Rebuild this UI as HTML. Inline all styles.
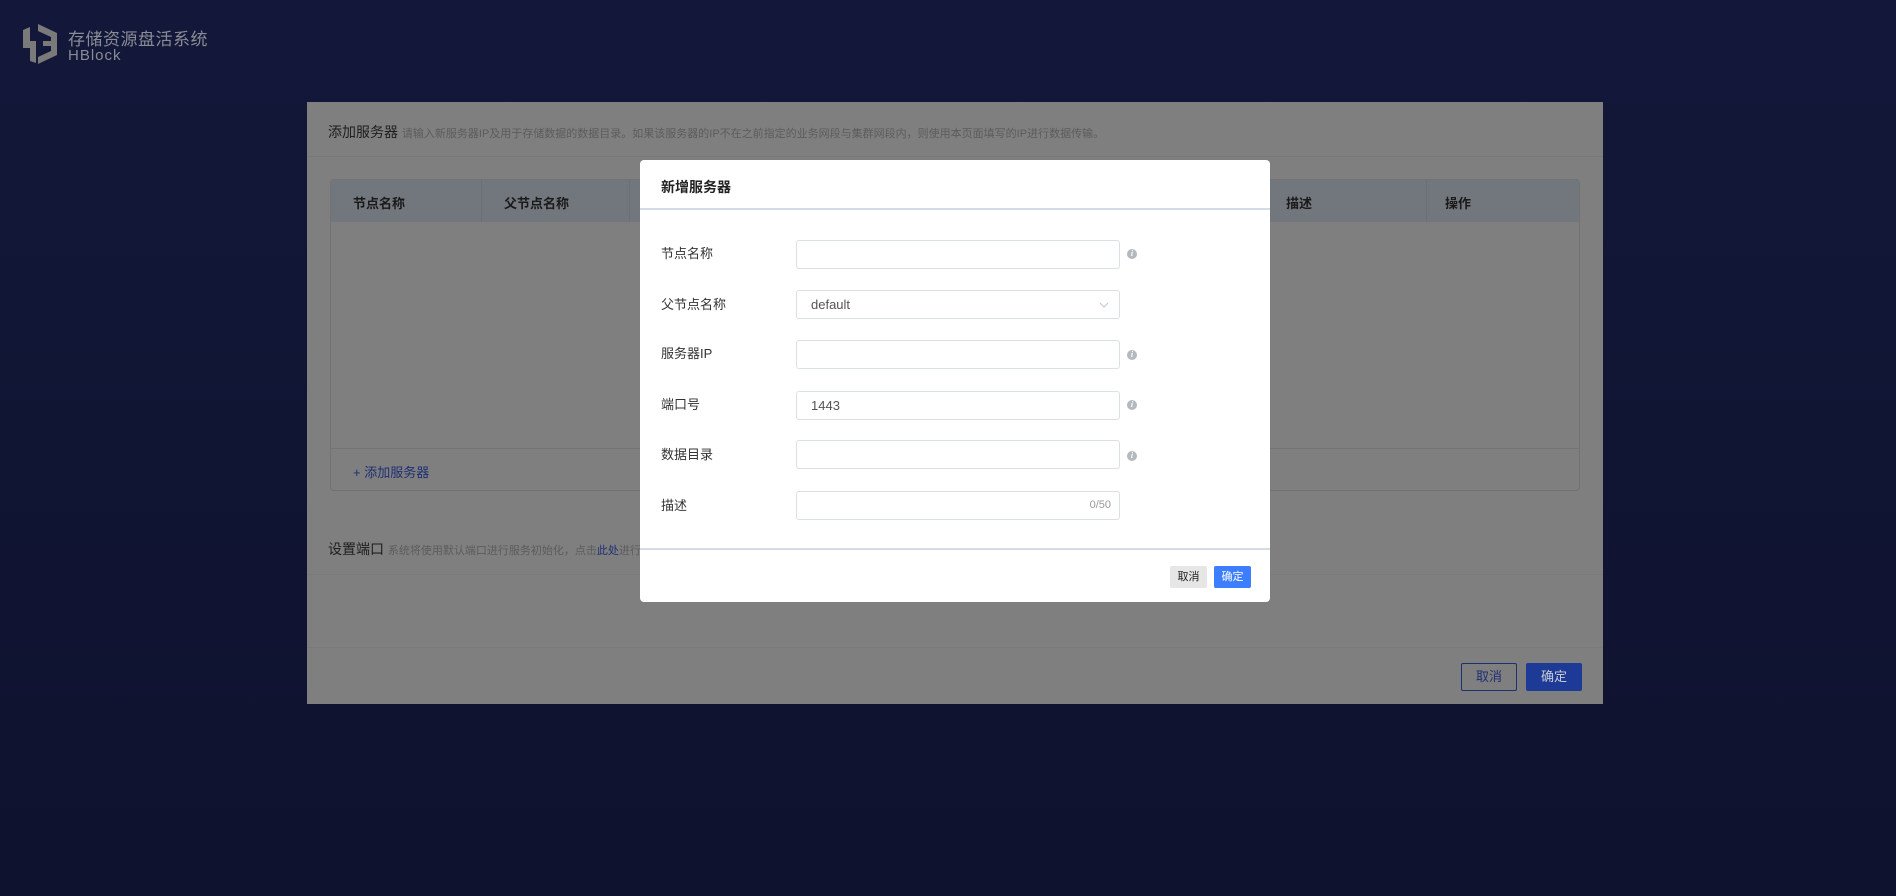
<!DOCTYPE html>
<html><head><meta charset="utf-8"><style>
*{margin:0;padding:0;box-sizing:border-box}
body{width:1896px;height:896px;overflow:hidden;background:linear-gradient(#13183a,#0e122e);font-family:"Liberation Sans","Noto Sans CJK SC",sans-serif;position:relative}
.abs{position:absolute}
.panel{left:307px;top:102px;width:1296px;height:602px;background:#7f7f7f}
.t{white-space:nowrap}
.gl{background:#767676;height:1px}
.modal{left:640px;top:160px;width:630px;height:442px;background:#fff;border-radius:4px}
.lbl{left:21px;font-size:13px;color:#333;line-height:16px}
.inp{left:156px;width:324px;height:29px;border:1px solid #dcdfe6;border-radius:3px;font-size:13px;color:#555;padding-left:14px;line-height:27px}
.info{left:487px;width:10px;height:10px;border-radius:50%;background:#b4b8bf;color:#fff;font-size:8px;font-style:italic;font-weight:bold;text-align:center;line-height:10px;font-family:"Liberation Serif",serif}
</style></head><body>
<svg class="abs" style="left:21px;top:22px" width="38" height="44" viewBox="0 0 38 44">
<path d="M2 8 L9 5 L9 19 L15 19 L15 41 L9 39 L9 26 L2 26 Z" fill="#7a7a7a"/>
<path d="M17 2 L36 11 L36 33 L17 42 L17 35 L30 29 L30 24 L22 24 L22 19 L30 19 L30 15 L17 9 Z" fill="#7a7a7a"/>
</svg>
<div class="abs t" style="left:68px;top:25px;font-size:17px;color:#8a8c95;letter-spacing:.5px">存储资源盘活系统</div>
<div class="abs t" style="left:68px;top:47px;font-size:15px;color:#8a8c95;letter-spacing:1px">HBlock</div>

<div class="abs panel">
<div class="abs t" style="left:21px;top:20px;font-size:14px;color:#1e1e1e">添加服务器 <span style="font-size:11px;color:#5c5c5c">请输入新服务器IP及用于存储数据的数据目录。如果该服务器的IP不在之前指定的业务网段与集群网段内，则使用本页面填写的IP进行数据传输。</span></div>
<div class="abs gl" style="left:0;top:54px;width:1296px;background:#787878"></div>
<div class="abs" style="left:23px;top:77px;width:1250px;height:312px;border:1px solid #727272;border-radius:4px">
<div class="abs" style="left:0;top:0;width:1248px;height:42px;background:#72767d"></div>
<div class="abs" style="left:150px;top:0;width:1px;height:42px;background:#6c7076"></div>
<div class="abs" style="left:298px;top:0;width:1px;height:42px;background:#6c7076"></div>
<div class="abs" style="left:1095px;top:0;width:1px;height:42px;background:#6c7076"></div>
<div class="abs t" style="left:22px;top:13px;font-size:13px;font-weight:bold;color:#1a1a1a">节点名称</div>
<div class="abs t" style="left:173px;top:13px;font-size:13px;font-weight:bold;color:#1a1a1a">父节点名称</div>
<div class="abs t" style="left:955px;top:13px;font-size:13px;font-weight:bold;color:#1a1a1a">描述</div>
<div class="abs t" style="left:1114px;top:13px;font-size:13px;font-weight:bold;color:#1a1a1a">操作</div>
<div class="abs gl" style="left:0;top:268px;width:1248px;background:#737373"></div>
<div class="abs t" style="left:22px;top:282px;font-size:13px;color:#1f2f73">+ 添加服务器</div>
</div>
<div class="abs t" style="left:21px;top:437px;font-size:14px;color:#1e1e1e">设置端口 <span style="font-size:11px;color:#5c5c5c">系统将使用默认端口进行服务初始化，点击<span style="color:#1f2f73">此处</span>进行</span></div>
<div class="abs gl" style="left:0;top:472px;width:1296px;background:#7a7a7a"></div>
<div class="abs gl" style="left:0;top:545px;width:1296px;background:#7a7a7a"></div>
<div class="abs t" style="left:1154px;top:561px;width:56px;height:28px;border:1px solid #1f2f73;border-radius:2px;font-size:13px;color:#1f2f73;text-align:center;line-height:26px">取消</div>
<div class="abs t" style="left:1219px;top:561px;width:56px;height:28px;background:#1d3a96;border-radius:2px;font-size:13px;color:#c8cbd4;text-align:center;line-height:28px">确定</div>
</div>

<div class="abs modal">
<div class="abs t" style="left:21px;top:17px;font-size:14px;font-weight:bold;color:#222">新增服务器</div>
<div class="abs" style="left:0;top:48px;width:630px;height:2px;background:#d3dbe6"></div>
<div class="abs lbl t" style="top:86px">节点名称</div>
<div class="abs inp" style="top:80px"></div><div class="abs info" style="top:89px">i</div>
<div class="abs lbl t" style="top:137px">父节点名称</div>
<div class="abs inp" style="top:130px">default<svg class="abs" style="right:10px;top:11px" width="10" height="6"><path d="M1 1 L5 5 L9 1" stroke="#c0c4cc" fill="none"/></svg></div>
<div class="abs lbl t" style="top:186px">服务器IP</div>
<div class="abs inp" style="top:180px"></div><div class="abs info" style="top:190px">i</div>
<div class="abs lbl t" style="top:237px">端口号</div>
<div class="abs inp" style="top:231px">1443</div><div class="abs info" style="top:240px">i</div>
<div class="abs lbl t" style="top:287px">数据目录</div>
<div class="abs inp" style="top:280px"></div><div class="abs info" style="top:291px">i</div>
<div class="abs lbl t" style="top:338px">描述</div>
<div class="abs inp" style="top:331px"><span class="abs" style="right:8px;font-size:11px;color:#999">0/50</span></div>
<div class="abs" style="left:0;top:388px;width:630px;height:2px;background:#d3dbe6"></div>
<div class="abs t" style="left:530px;top:406px;width:37px;height:22px;background:#e6e6e6;border-radius:2px;font-size:11px;color:#222;text-align:center;line-height:22px">取消</div>
<div class="abs t" style="left:574px;top:406px;width:37px;height:22px;background:#3d7dff;border-radius:2px;font-size:11px;color:#fff;text-align:center;line-height:22px">确定</div>
</div>
</body></html>
